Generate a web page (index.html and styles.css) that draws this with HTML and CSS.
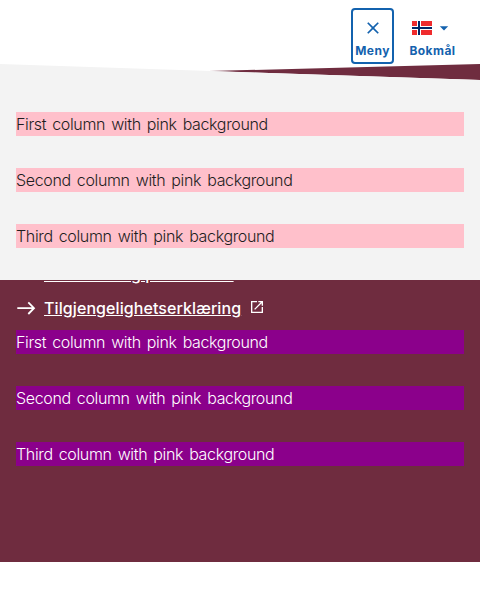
FILE: index.html
```
<!DOCTYPE html>
<html lang="nb">
<head>
<meta charset="utf-8">
<title>Meny</title>
<link rel="stylesheet" href="styles.css">
</head>
<body>
<header class="header">
  <button class="menu-button" type="button">
    <svg class="icon" viewBox="0 0 24 24"><path fill="currentColor" d="M19 6.41 17.59 5 12 10.59 6.41 5 5 6.41 10.59 12 5 17.59 6.41 19 12 13.41 17.59 19 19 17.59 13.41 12z"/></svg>
    <span>Meny</span>
  </button>
  <button class="language-button" type="button">
    <span class="language-icons">
      <svg class="flag" viewBox="0 0 20 14"><path fill="#ef2b2d" d="M0 0h20v14H0z"/><path fill="#fff" d="M5 0h4v14H5zM0 5h20v4H0z"/><path fill="#002868" d="M6 0h2v14H6zM0 6h20v2H0z"/></svg>
      <svg class="caret" viewBox="0 0 24 24"><path fill="currentColor" d="m7 10 5 5 5-5z"/></svg>
    </span>
    <span>Bokmål</span>
  </button>
</header>
<nav class="menu">
  <div class="column">First column with pink background</div>
  <div class="column">Second column with pink background</div>
  <div class="column">Third column with pink background</div>
</nav>
<footer class="footer">
  <ul class="links">
    <li class="link-row"><svg class="icon arrow" viewBox="0 0 24 24"></svg><a class="link" href="#">Sikkerhet og personvern</a></li>
    <li class="link-row">
      <svg class="icon arrow" viewBox="0 0 20 20"><path fill="none" stroke="currentColor" stroke-width="1.8" d="M1.3 10.2H18M12.3 4.4l5.7 5.8-5.7 5.8"/></svg>
      <a class="link" href="#">Tilgjengelighetserklæring</a>
      <svg class="external" viewBox="0 0 24 24"><path fill="currentColor" d="M19 19H5V5h7V3H3v18h18v-9h-2zM14 3v2h3.59l-9.83 9.83 1.41 1.41L19 6.41V10h2V3z"/></svg>
    </li>
  </ul>
  <div class="footer-columns">
    <div class="column">First column with pink background</div>
    <div class="column">Second column with pink background</div>
    <div class="column">Third column with pink background</div>
  </div>
</footer>
</body>
</html>
```
FILE: styles.css
```
* { box-sizing: border-box; }

body {
  margin: 0;
  background: #fff;
  color: #1e1e1e;
  font: 400 16px/24px Inter, sans-serif;
}

.header {
  position: relative;
  display: flex;
  justify-content: flex-end;
  height: 80px;
  padding: 8px 16px 0 0;
  background: #fff;
}

/* The slanted band between the header and the menu */
.header::before {
  content: "";
  position: absolute;
  inset: 0;
  background: #6f2c3f;
  clip-path: polygon(209px 71.1px, 100% 64px, 100% 100%);
}

.menu-button,
.language-button {
  position: relative;
  display: flex;
  flex-direction: column;
  align-items: center;
  height: 56px;
  padding: 8px 0 0;
  border: 2px solid transparent;
  border-radius: 4px;
  background: none;
  color: #1362ae;
  font: 750 12px/18px Inter, sans-serif;
  letter-spacing: 0.45px;
}

.menu-button {
  width: 43px;
  margin-right: 7px;
  border-color: #1362ae;
}

.language-button { width: 63px; }

.icon {
  flex: none;
  width: 20px;
  height: 20px;
  margin-bottom: 4px;
}

.language-icons {
  display: flex;
  align-items: center;
  gap: 2px;
  height: 20px;
  margin-bottom: 4px;
}

.flag { width: 20px; height: 14px; }
.caret { width: 20px; height: 20px; }

.menu {
  position: relative;
  display: grid;
  gap: 32px;
  height: 216px;
  margin-top: -16px;
  padding: 48px 16px 32px;
  background: #f3f3f3;
  clip-path: polygon(0 0, 100% 16px, 100% 100%, 0 100%);
}

.column {
  font-weight: 350;
  letter-spacing: -0.35px;
  word-spacing: 1.9px;
}

.menu .column { background: #ffc0cb; }

.footer {
  height: 282px;
  padding: 0 16px;
  overflow: hidden;
  background: #6f2c3f;
  color: #fff;
}

.links {
  margin: -18px 0 10px;
  padding: 0;
  list-style: none;
}

.link-row {
  display: flex;
  align-items: center;
  height: 24px;
  margin-bottom: 10px;
}

.arrow { margin: 0 8px 0 0; }

.link {
  color: inherit;
  font-weight: 500;
  letter-spacing: 0.08px;
  text-underline-offset: 1px;
}

.external { width: 16px; height: 16px; margin: -2px 0 0 8px; }

.footer-columns { display: grid; gap: 32px; }
.footer-columns .column { background: #8b008b; }
```
